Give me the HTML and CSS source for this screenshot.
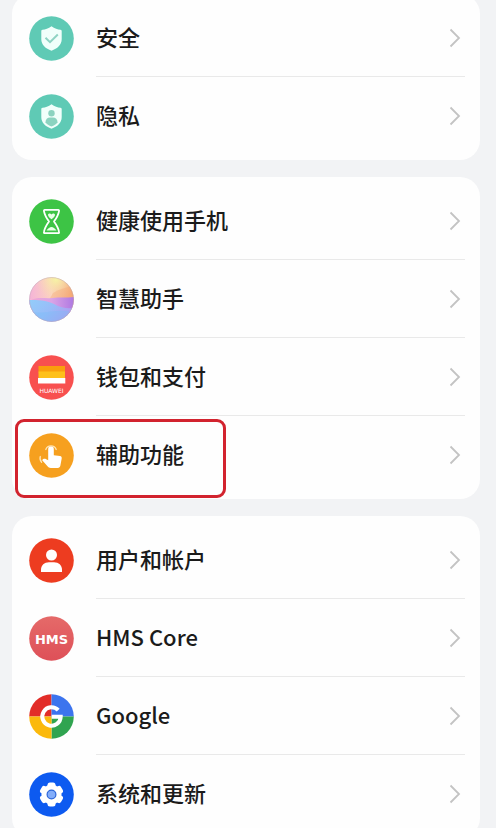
FILE: index.html
```html
<!DOCTYPE html>
<html lang="zh-CN">
<head>
<meta charset="utf-8">
<meta name="viewport" content="width=device-width, initial-scale=1">
<title>设置</title>
<link rel="stylesheet" href="styles.css">
</head>
<body>
<svg class="defs" aria-hidden="true">
  <symbol id="chevron" viewBox="0 0 12 20"><path d="M1.500 1.500 10 10l-8.500 8.500" fill="none" stroke="currentColor" stroke-width="1.800"/></symbol>
</svg>
<main class="settings">
  <nav class="card">
    <a class="row" href="#security">
      <svg class="icon" viewBox="0 0 45 45" aria-hidden="true">
        <circle cx="22.500" cy="22.500" r="22.300" fill="#5fcab5"/>
        <path d="M22.500 10.300c3 2.300 6.300 3.300 9 3.500.8.100 1.200.5 1.200 1.300v8.200c0 5.600-4.400 9.400-10.200 11.400-5.800-2-10.200-5.800-10.200-11.400v-8.200c0-.8.400-1.200 1.200-1.300 2.700-.2 6-1.200 9-3.500z" fill="#f1fffb"/>
        <path d="m16.500 21.800 4.500 4.300 7.800-7.600" fill="none" stroke="#8fd3c3" stroke-width="2"/>
      </svg>
      <span class="content"><span class="label">安全</span><svg class="chevron" aria-hidden="true"><use href="#chevron"/></svg></span>
    </a>
    <a class="row" href="#privacy">
      <svg class="icon" viewBox="0 0 45 45" aria-hidden="true">
        <circle cx="22.500" cy="22.500" r="22.300" fill="#5fcab5"/>
        <path d="M22.500 10.300c3 2.300 6.300 3.300 9 3.500.8.100 1.200.5 1.200 1.300v8.200c0 5.600-4.400 9.400-10.200 11.400-5.800-2-10.200-5.800-10.200-11.400v-8.200c0-.8.400-1.200 1.200-1.300 2.700-.2 6-1.200 9-3.500z" fill="#f1fffb"/>
        <circle cx="22.500" cy="19.300" r="3.200" fill="#8bd3c0"/>
        <path d="M16.500 28.300c0-3.200 1.900-4.800 4.500-4.800h3c2.600 0 4.500 1.600 4.500 4.800-1.400 2-3.400 3.300-6 4.300-2.600-1-4.600-2.300-6-4.300z" fill="#8bd3c0"/>
      </svg>
      <span class="content"><span class="label">隐私</span><svg class="chevron" aria-hidden="true"><use href="#chevron"/></svg></span>
    </a>
  </nav>

  <nav class="card">
    <a class="row" href="#digital-balance">
      <svg class="icon" viewBox="0 0 45 45" aria-hidden="true">
        <circle cx="22.500" cy="22.500" r="22.300" fill="#3dc445"/>
        <path d="M15.800 10.800h13.400c.8 0 1 .7.8 1.500-.8 4.200-2.300 6.500-5 10.200 2.700 3.700 4.200 6 5 10.200.2.900 0 1.500-.8 1.500H15.800c-.8 0-1-.6-.8-1.500.8-4.200 2.300-6.500 5-10.200-2.700-3.700-4.200-6-5-10.200-.2-.8 0-1.500.8-1.500z" fill="none" stroke="#fff" stroke-width="1.800" stroke-linejoin="round"/>
        <path d="M19 16c0-1.800 2.600-2 3.500-.5.900-1.500 3.500-1.300 3.500.5 0 1.500-1.800 2.800-3.500 4.300C20.800 18.800 19 17.500 19 16zM17.500 31.500c1.700-2.200 3.300-3.400 5-3.400s3.300 1.200 5 3.400z" fill="#e9ffe8"/>
      </svg>
      <span class="content"><span class="label">健康使用手机</span><svg class="chevron" aria-hidden="true"><use href="#chevron"/></svg></span>
    </a>
    <a class="row" href="#assistant">
      <svg class="icon" viewBox="0 0 45 45" aria-hidden="true">
        <defs>
          <linearGradient id="sky" x1="0" y1=".4" x2="1" y2=".3"><stop offset="0" stop-color="#f5b3d8"/><stop offset=".5" stop-color="#fbd3c0"/><stop offset="1" stop-color="#f3a56c"/></linearGradient>
          <radialGradient id="sun" cx=".6" cy=".05" r=".45"><stop offset="0" stop-color="#f6f4a4"/><stop offset="1" stop-color="#f9d7b0" stop-opacity="0"/></radialGradient>
          <linearGradient id="hill" x1="0" y1="0" x2="1" y2="0"><stop offset="0" stop-color="#f3a8d2"/><stop offset=".5" stop-color="#dba4e6"/><stop offset="1" stop-color="#ae78e2"/></linearGradient>
          <linearGradient id="sea" x1="0" y1="0" x2="1" y2=".5"><stop offset="0" stop-color="#93cdfa"/><stop offset=".55" stop-color="#98bcf8"/><stop offset="1" stop-color="#b19cf0"/></linearGradient>
          <clipPath id="orb"><circle cx="22.500" cy="22.500" r="22.300"/></clipPath>
        </defs>
        <g clip-path="url(#orb)">
          <path d="M0 0h45v45H0z" fill="url(#sky)"/>
          <path d="M0 0h45v45H0z" fill="url(#sun)"/>
          <path d="M24 16c7-4 13-6 21-7v14H20z" fill="#f5a979" opacity=".4"/>
          <path d="M0 24c9-5 16-2 23-3 8-1 14 0 22-1v16H0z" fill="url(#hill)"/>
          <path d="M0 23c9 0 17 0 25 4 7 4 13 5 20 4v14H0z" fill="url(#sea)"/>
          <path d="M0 34c12 4 22-1 40 0v11H0z" fill="#79bff7" opacity=".4"/>
        </g>
        <circle cx="22.500" cy="22.500" r="22" fill="none" stroke="#b8a5b8" stroke-width=".6" opacity=".7"/>
      </svg>
      <span class="content"><span class="label">智慧助手</span><svg class="chevron" aria-hidden="true"><use href="#chevron"/></svg></span>
    </a>
    <a class="row" href="#wallet">
      <svg class="icon" viewBox="0 0 45 45" aria-hidden="true">
        <circle cx="22.500" cy="22.500" r="22.300" fill="#f8504f"/>
        <path d="M9.500 11h26.500v6.500H9.500z" fill="#fa9e0d"/>
        <path d="M9.500 16.500h26.500v7H9.500z" fill="#fec01a"/>
        <path d="M9 23h27.300v5.500H9z" fill="#fff"/>
        <text class="wallet-mark" x="22.500" y="37.500">HUAWEI</text>
      </svg>
      <span class="content"><span class="label">钱包和支付</span><svg class="chevron" aria-hidden="true"><use href="#chevron"/></svg></span>
    </a>
    <a class="row highlighted" href="#accessibility">
      <svg class="icon" viewBox="0 0 45 45" aria-hidden="true">
        <circle cx="22.500" cy="22.500" r="22.300" fill="#f6a01f"/>
        <path d="M19.200 16a2.800 2.800 0 0 1 5.600 0v6.300l6.200.8c1.300.2 1.900 1.100 1.700 2.400l-1.300 7.100c-.3 1.600-1.200 2.300-2.700 2.300h-6.900c-1.500 0-2.400-.5-3.300-1.700l-5.300-5.900c.9-1.500 2.500-1.800 4-1l2 1z" fill="#fff"/>
        <path d="M16.800 16.500a5.500 5.500 0 0 1 10.400 0M11.300 23.500c-.7 2.200-.1 4.200 1.300 5.700" fill="none" stroke="#ffe3b1" stroke-width="1.300" stroke-linecap="round"/>
      </svg>
      <span class="content"><span class="label">辅助功能</span><svg class="chevron" aria-hidden="true"><use href="#chevron"/></svg></span>
    </a>
  </nav>

  <nav class="card">
    <a class="row" href="#users">
      <svg class="icon" viewBox="0 0 45 45" aria-hidden="true">
        <circle cx="22.500" cy="22.500" r="22.300" fill="#ed3c20"/>
        <circle cx="22.500" cy="17" r="5.500" fill="#fff"/>
        <path d="M12 34v-2c0-4.700 3.300-7.700 8-7.700h5c4.700 0 8 3 8 7.700v2z" fill="#fff"/>
      </svg>
      <span class="content"><span class="label">用户和帐户</span><svg class="chevron" aria-hidden="true"><use href="#chevron"/></svg></span>
    </a>
    <a class="row" href="#hms">
      <svg class="icon" viewBox="0 0 45 45" aria-hidden="true">
        <defs><linearGradient id="hms" x1="0" y1="0" x2="0" y2="1"><stop offset="0" stop-color="#e56a69"/><stop offset="1" stop-color="#de5058"/></linearGradient></defs>
        <circle cx="22.500" cy="22.500" r="22.300" fill="url(#hms)"/>
        <text class="hms-mark" x="22.500" y="27.500">HMS</text>
      </svg>
      <span class="content"><span class="label">HMS Core</span><svg class="chevron" aria-hidden="true"><use href="#chevron"/></svg></span>
    </a>
    <a class="row" href="#google">
      <svg class="icon" viewBox="0 0 45 45" aria-hidden="true">
        <path d="M22.500 22.500H.2A22.300 22.300 0 0 1 22.500.2z" fill="#e22d28"/>
        <path d="M22.500 22.500V.2a22.300 22.300 0 0 1 22.300 22.300z" fill="#3c74ee"/>
        <path d="M22.500 22.500h22.300a22.300 22.300 0 0 1-22.300 22.300z" fill="#30a450"/>
        <path d="M22.500 22.500v22.300A22.300 22.300 0 0 1 .2 22.500z" fill="#fbb90c"/>
        <path d="M29.200 16.200a9.200 9.200 0 1 0 2.500 6.500h-9" fill="none" stroke="#fff" stroke-width="4"/>
      </svg>
      <span class="content"><span class="label">Google</span><svg class="chevron" aria-hidden="true"><use href="#chevron"/></svg></span>
    </a>
    <a class="row" href="#system">
      <svg class="icon" viewBox="0 0 45 45" aria-hidden="true">
        <circle cx="22.500" cy="22.500" r="22.300" fill="#0d5af0"/>
        <g fill="#fff">
          <circle cx="22.500" cy="22.500" r="10"/>
          <rect x="18.500" y="10.500" width="8" height="24" rx="2.500"/>
          <rect x="18.500" y="10.500" width="8" height="24" rx="2.500" transform="rotate(60 22.500 22.500)"/>
          <rect x="18.500" y="10.500" width="8" height="24" rx="2.500" transform="rotate(120 22.500 22.500)"/>
        </g>
        <circle cx="22.500" cy="22.500" r="4.400" fill="#83adfa" stroke="#2c65d8" stroke-width="1.200"/>
      </svg>
      <span class="content"><span class="label">系统和更新</span><svg class="chevron" aria-hidden="true"><use href="#chevron"/></svg></span>
    </a>
  </nav>
</main>
</body>
</html>
```
FILE: styles.css
```css
*,
*::after {
  box-sizing: border-box;
}

html {
  scrollbar-width: none;
}

body {
  margin: 0;
  background: #f2f3f5;
  color: #1b1b1b;
  font-family: "Noto Sans CJK SC", sans-serif;
}

.defs {
  display: none;
}

/* The list is scrolled slightly past the first card's top edge. */
.settings {
  display: flex;
  flex-direction: column;
  gap: 17px;
  margin-top: -6px;
  padding: 0 16px 16px 12px;
}

.card {
  padding: 5px 0;
  border-radius: 20px;
  background: #fefefe;
}

.row {
  position: relative;
  display: flex;
  align-items: center;
  gap: 22px;
  padding: 0 15px 0 17px;
  color: inherit;
  text-decoration: none;
}

.icon {
  flex: none;
  width: 45px;
  height: 45px;
}

.content {
  flex: 1;
  display: flex;
  align-items: center;
  justify-content: space-between;
  height: 78px;
  padding-right: 4px;
  border-bottom: 1px solid #e9e9e9;
}

.row:last-child .content {
  border-bottom-color: transparent;
}

.label {
  padding-bottom: 3px;
  font-size: 22px;
  font-weight: 500;
  line-height: 32px;
}

.chevron {
  width: 12px;
  height: 20px;
  color: #c3c3c3;
}

.highlighted::after {
  content: "";
  position: absolute;
  top: 3px;
  bottom: -4px;
  left: 3px;
  width: 211px;
  border: 3px solid #d2232e;
  border-radius: 9px;
}

.wallet-mark,
.hms-mark {
  fill: #fff;
  font-family: "DejaVu Sans", sans-serif;
  text-anchor: middle;
}

.wallet-mark {
  font-size: 6px;
}

.hms-mark {
  font-size: 13px;
  font-weight: 700;
}
```
